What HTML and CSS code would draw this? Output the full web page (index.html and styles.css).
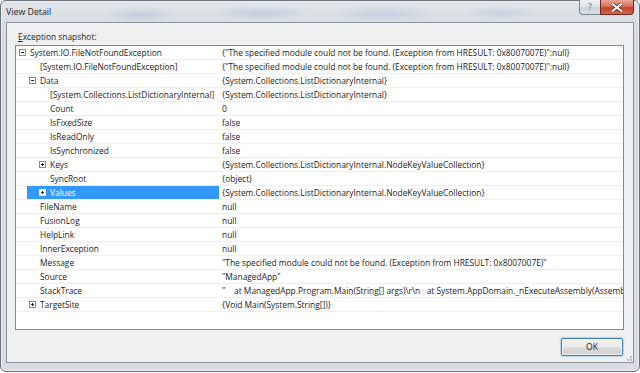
FILE: index.html
```html
<!DOCTYPE html>
<html>
<head>
<meta charset="utf-8">
<title>View Detail</title>
<link rel="stylesheet" href="styles.css">
</head>
<body>
<div class="window">
  <div class="titlebar">
    <span class="title">View Detail</span>
    <div class="caption">
      <div class="cbtn help">?</div>
      <div class="cbtn close">
        <svg width="12" height="9" viewBox="0 0 12 9"><path d="M1.5 1 L10.5 8 M10.5 1 L1.5 8" stroke="#5a1d14" stroke-width="3.4" stroke-linecap="square" fill="none"/><path d="M1.5 1 L10.5 8 M10.5 1 L1.5 8" stroke="#ffffff" stroke-width="2" stroke-linecap="square" fill="none"/></svg>
      </div>
    </div>
  </div>
  <div class="client">
    <div class="label"><u>E</u>xception snapshot:</div>
    <div class="grid">
      <div class="row"><div class="name l0"><span class="cell"><span class="exp minus"></span><span class="text">System.IO.FileNotFoundException</span></span></div><div class="value">{"The specified module could not be found. (Exception from HRESULT: 0x8007007E)":null}</div></div>
      <div class="row"><div class="name l1"><span class="cell"><span class="sp"></span><span class="text">[System.IO.FileNotFoundException]</span></span></div><div class="value">{"The specified module could not be found. (Exception from HRESULT: 0x8007007E)":null}</div></div>
      <div class="row"><div class="name l1"><span class="cell"><span class="exp minus"></span><span class="text">Data</span></span></div><div class="value">{System.Collections.ListDictionaryInternal}</div></div>
      <div class="row"><div class="name l2"><span class="cell"><span class="sp"></span><span class="text">[System.Collections.ListDictionaryInternal]</span></span></div><div class="value">{System.Collections.ListDictionaryInternal}</div></div>
      <div class="row"><div class="name l2"><span class="cell"><span class="sp"></span><span class="text">Count</span></span></div><div class="value">0</div></div>
      <div class="row"><div class="name l2"><span class="cell"><span class="sp"></span><span class="text">IsFixedSize</span></span></div><div class="value">false</div></div>
      <div class="row"><div class="name l2"><span class="cell"><span class="sp"></span><span class="text">IsReadOnly</span></span></div><div class="value">false</div></div>
      <div class="row"><div class="name l2"><span class="cell"><span class="sp"></span><span class="text">IsSynchronized</span></span></div><div class="value">false</div></div>
      <div class="row"><div class="name l2"><span class="cell"><span class="exp plus"></span><span class="text">Keys</span></span></div><div class="value">{System.Collections.ListDictionaryInternal.NodeKeyValueCollection}</div></div>
      <div class="row"><div class="name l2"><span class="cell"><span class="sp"></span><span class="text">SyncRoot</span></span></div><div class="value">{object}</div></div>
      <div class="row selected"><div class="name l2"><span class="cell"><span class="exp plus"></span><span class="text">Values</span></span></div><div class="value">{System.Collections.ListDictionaryInternal.NodeKeyValueCollection}</div></div>
      <div class="row"><div class="name l1"><span class="cell"><span class="sp"></span><span class="text">FileName</span></span></div><div class="value">null</div></div>
      <div class="row"><div class="name l1"><span class="cell"><span class="sp"></span><span class="text">FusionLog</span></span></div><div class="value">null</div></div>
      <div class="row"><div class="name l1"><span class="cell"><span class="sp"></span><span class="text">HelpLink</span></span></div><div class="value">null</div></div>
      <div class="row"><div class="name l1"><span class="cell"><span class="sp"></span><span class="text">InnerException</span></span></div><div class="value">null</div></div>
      <div class="row"><div class="name l1"><span class="cell"><span class="sp"></span><span class="text">Message</span></span></div><div class="value">"The specified module could not be found. (Exception from HRESULT: 0x8007007E)"</div></div>
      <div class="row"><div class="name l1"><span class="cell"><span class="sp"></span><span class="text">Source</span></span></div><div class="value">"ManagedApp"</div></div>
      <div class="row"><div class="name l1"><span class="cell"><span class="sp"></span><span class="text">StackTrace</span></span></div><div class="value">"    at ManagedApp.Program.Main(String[] args)\r\n   at System.AppDomain._nExecuteAssembly(Assembly assembly, String[] args)"</div></div>
      <div class="row"><div class="name l1"><span class="cell"><span class="exp plus"></span><span class="text">TargetSite</span></span></div><div class="value">{Void Main(System.String[])}</div></div>
    </div>
    <div class="footer">
      <button class="ok">OK</button>
      <span class="grip"></span>
    </div>
  </div>
</div>
</body>
</html>
```

FILE: styles.css
```css
* { box-sizing: border-box; }
html, body { margin: 0; padding: 0; }
body {
  width: 640px;
  height: 373px;
  overflow: hidden;
  background: #ffffff;
  font-family: "Open Sans", "Noto Sans", sans-serif;
  font-size: 8.4px;
  color: #1b1b1b;
}

.window {
  width: 640px;
  height: 372px;
  display: flex;
  flex-direction: column;
  padding: 0 5px 8px 5px;
  border: 1px solid #6c7178;
  border-radius: 6px;
  background:
    radial-gradient(ellipse 40px 8px at 140px 14px, rgba(150,170,200,0.35), transparent),
    radial-gradient(ellipse 50px 7px at 260px 12px, rgba(140,165,205,0.35), transparent),
    radial-gradient(ellipse 60px 8px at 380px 13px, rgba(150,170,210,0.3), transparent),
    radial-gradient(ellipse 40px 6px at 500px 12px, rgba(150,175,210,0.3), transparent),
    linear-gradient(#e1e5ea, #d6dbe1 30px, #d9dde3);
  box-shadow: inset 0 0 0 1px rgba(255,255,255,0.55);
}

.titlebar {
  height: 21px;
  flex: none;
  display: flex;
  justify-content: space-between;
  align-items: flex-start;
}

.title {
  margin-top: 4px;
  line-height: 14px;
  font-size: 8.8px;
  color: #1e1e1e;
}

.caption {
  display: flex;
  margin-top: -1px;
}

.cbtn {
  height: 15px;
  display: flex;
  align-items: center;
  justify-content: center;
}

.help {
  width: 21px;
  border: 1px solid #7d848d;
  border-right: none;
  border-top: none;
  border-radius: 0 0 0 4px;
  background: linear-gradient(#eef1f5, #dde2e8 50%, #cfd5dc 51%, #d9dee4);
  color: #7a7f86;
  font-size: 9px;
  font-family: "DejaVu Sans", sans-serif;
}

.close {
  width: 34px;
  border: 1px solid #6e2a20;
  border-top: none;
  border-radius: 0 0 4px 0;
  background: linear-gradient(#eaa596, #d9735f 45%, #c2442c 55%, #d0644a);
}

.client {
  flex: 1;
  display: flex;
  flex-direction: column;
  background: #f0f0f0;
  border: 1px solid #8b9299;
  padding: 7px 9px 6px 8px;
}

.label {
  line-height: 14px;
  padding-left: 3px;
  margin-bottom: 1px;
  color: #1b1b1b;
}

.grid {
  height: 285px;
  flex: none;
  border: 1px solid #828790;
  background: #ffffff;
  overflow: hidden;
}

.row {
  height: 14px;
  display: flex;
  border-bottom: 1px solid #efefef;
  white-space: pre;
}

.name {
  width: 204px;
  flex: none;
  display: flex;
  overflow: hidden;
}

.cell {
  flex: 1;
  display: flex;
  align-items: center;
}

.l0 .cell { padding-left: 3px; }
.l1 .cell { padding-left: 13px; }
.l2 .cell { padding-left: 23px; }

.row.selected .name { padding-left: 11px; padding-right: 1px; }
.row.selected .cell {
  padding-left: 12px;
  background: #3399ff;
  color: #ffffff;
}

.exp, .sp {
  width: 7px;
  height: 7px;
  flex: none;
  margin-right: 4px;
}

.exp {
  position: relative;
  border: 1px solid #8a8a8a;
  background: #ffffff;
}

.exp::before {
  content: "";
  position: absolute;
  left: 1px;
  top: 2px;
  width: 3px;
  height: 1px;
  background: #222222;
}

.exp.plus::after {
  content: "";
  position: absolute;
  left: 2px;
  top: 1px;
  width: 1px;
  height: 3px;
  background: #222222;
}

.row.selected .exp { border-color: #e6f0ff; }

.text {
  line-height: 13px;
}

.value {
  flex: 1;
  padding-left: 2px;
  line-height: 13px;
  overflow: hidden;
}

.footer {
  margin-top: 8px;
  display: flex;
  justify-content: flex-end;
  position: relative;
}

.ok {
  width: 62px;
  height: 18px;
  margin: 0 1px 0 0;
  padding: 0;
  font-family: inherit;
  font-size: 8.6px;
  color: #1b1b1b;
  border: 1px solid #3c7fb1;
  border-radius: 2px;
  background: linear-gradient(#f2f2f2, #ebebeb 48%, #dddddd 50%, #cfcfcf);
  box-shadow: inset 0 0 0 1px rgba(255,255,255,0.7), 0 0 1px 1px rgba(90,170,230,0.35);
}

.grip {
  position: absolute;
  right: -8px;
  bottom: -5px;
  width: 5px;
  height: 5px;
  background:
    radial-gradient(circle at 4px 1px, #b9b9b9 0.8px, transparent 1px),
    radial-gradient(circle at 4px 4px, #b9b9b9 0.8px, transparent 1px),
    radial-gradient(circle at 1px 4px, #b9b9b9 0.8px, transparent 1px);
}
```
